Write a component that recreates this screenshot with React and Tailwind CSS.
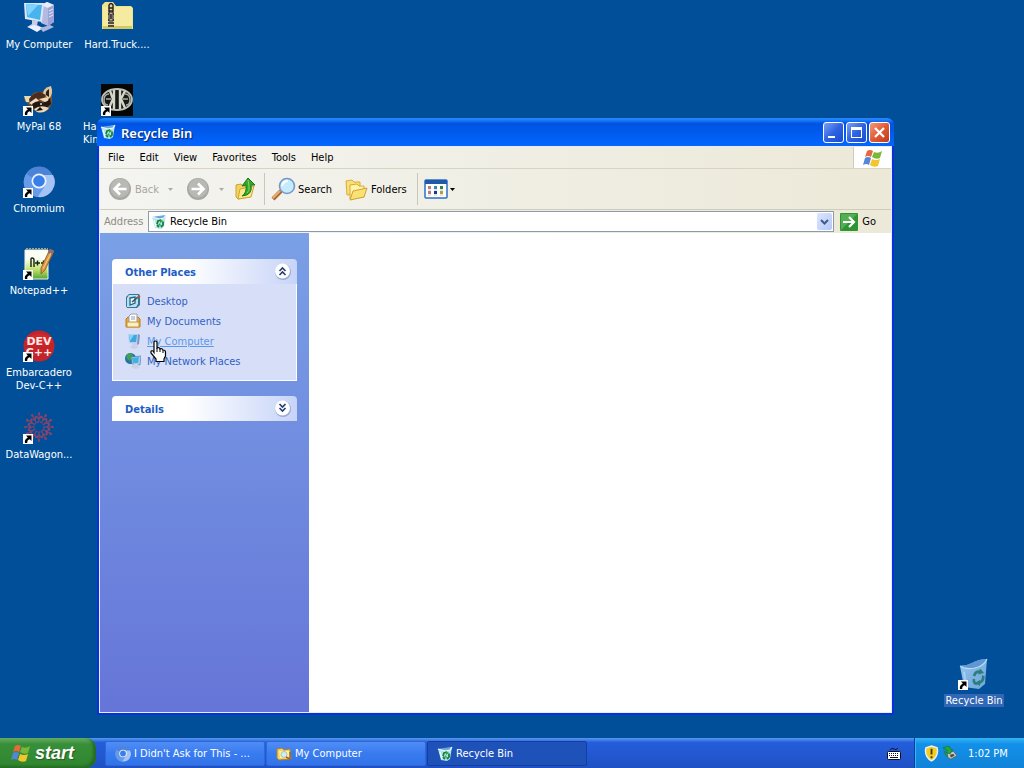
import React, { useState } from "react";

const UI = "font-['DejaVu_Sans_Condensed','DejaVu_Sans',sans-serif]";

function BinIcon({ className }) {
  return (
    <svg viewBox="0 0 32 32" className={className} aria-hidden="true">
      <defs>
        <linearGradient id="bin-body" x1="0" x2="1" y1="0" y2="1">
          <stop offset="0" stopColor="#9fcaf0" />
          <stop offset="0.5" stopColor="#7fb3e4" />
          <stop offset="1" stopColor="#6ea6da" />
        </linearGradient>
      </defs>
      <path d="M2 8 Q8 8 14 5 Q21 1 29 1 L27 26 L21 31 L6 29 Z" fill="url(#bin-body)" />
      <path d="M2 8 Q8 8 14 5 Q21 1 29 1 Q26 8 16 10 Q8 11 2 8 Z" fill="#6097d2" />
      <path d="M2 8 Q9 12 17 10 Q26 8 29 1" fill="none" stroke="#b4dcf6" strokeWidth="1.2" />
      <path d="M6 14 L8 27" stroke="#b9e0f6" strokeWidth="2" opacity="0.6" />
      <g fill="none" stroke="#2b7f78" strokeWidth="2.6">
        <path d="M16 18 Q18 12 23 14 M25 18 Q26 23 21 25 M19 26 Q15 25 16 21" />
      </g>
      <path d="M22 10.5 L26 15 L20 16.500 Z M22 22 L22 28 L17 25 Z M24 17 L27 19 L24 21 Z" fill="#2b7f78" />
    </svg>
  );
}

function SmallBinIcon({ className }) {
  return (
    <svg viewBox="0 0 16 16" className={className} aria-hidden="true">
      <path d="M1 3 L7 3 L15 1 L13 13 L10 15 L4 14 Z" fill="#b4e3f0" />
      <path d="M1 3 L7 2 L15 1 L13 4 L8 5 Z" fill="#6da9d8" />
      <path d="M1 3 L8 5 L13 4 L15 1 M3 6 L5 13" fill="none" stroke="#edfcff" strokeWidth="1.2" />
      <path d="M6 10 L7 7 L10 6 M12 7.500 L12 11 L10 13 M8 13 L6 11" fill="none" stroke="#168034" strokeWidth="1.8" />
      <path d="M9 5 L12 7 L9 9 Z M7 11 L9 9 L10 12 Z" fill="#29a43f" />
    </svg>
  );
}

function FlagIcon({ className }) {
  return (
    <svg viewBox="0 0 20 18" className={className} aria-hidden="true">
      <path d="M4 2 Q7 0 10 2 L8 8 Q5 6 2 8 Z" fill="#e9683b" />
      <path d="M11 3 Q15 5 19 2 L17 9 Q13 11 9 8 Z" fill="#78b83b" />
      <path d="M2 9 Q5 7 8 9 L6 16 Q3 14 0 16 Z" fill="#5286d8" />
      <path d="M9 10 Q13 12 17 10 L15 17 Q11 19 7 16 Z" fill="#f4c52d" />
    </svg>
  );
}

function ComputerIcon({ className }) {
  return (
    <svg viewBox="0 0 32 32" className={className} aria-hidden="true">
      <path d="M18 3 L24 0 L31 3 L31 20 L25 24 L18 21 Z" fill="#b4b9e1" />
      <path d="M18 3 L24 0 L31 3 L25 6 Z" fill="#e9ecfa" />
      <path d="M25 6 L31 3 V20 L25 24 Z" fill="#9aa2d6" />
      <path d="M26 9 L30 7 M26 12 L30 10 M26 15 L30 13" stroke="#e5e9ff" />
      <path d="M1 1 L21 1 L19 20 L2 17 Z" fill="#d9e7f7" />
      <path d="M3 2 L19 3 L17 18 L4 15 Z" fill="#49b3f0" />
      <path d="M3 2 L15 3 L5 14 Z" fill="#7ed4fd" />
      <path d="M9 18 L15 19 L14 23 L20 26 L14 29 L4 25 L9 22 Z" fill="#c7cce9" />
      <path d="M5 25 L11 23 L20 26 L14 30 Z" fill="#edf0fc" />
      <path d="M17 26 L27 23 L31 25 L20 30 Z" fill="#aeb5dc" />
    </svg>
  );
}

function ZipFolderIcon({ className }) {
  return (
    <svg viewBox="0 0 32 32" className={className} aria-hidden="true">
      <path d="M1 3 L4 0 H12 L15 4 H30 L32 6 V27 H1 Z" fill="#eee28a" />
      <path d="M2 5 H31 V26 H2 Z" fill="#f5eba0" />
      <path d="M2 24 H31 V27 H2 Z" fill="#d4c85e" />
      <path d="M7 2 Q10 -1 13 2 V25 H7 Z" fill="#d8d0b0" />
      <path d="M8 3 Q10 0 12 3 V10 M8 3 V10" fill="none" stroke="#272319" strokeWidth="1.4" />
      <path d="M8 6 H12 M8 9 H12 M7 12 H13 M7 18 H13 M7 21 H13 M7 24 H13" stroke="#272319" strokeWidth="1.5" />
      <path d="M8 10 H12 V19 H8 Z" fill="#bab1a7" stroke="#29231c" />
      <path d="M10 12 V17" stroke="#29231c" strokeWidth="1.500" />
    </svg>
  );
}

function RaccoonIcon({ className }) {
  return (
    <svg viewBox="0 0 32 32" className={className} aria-hidden="true">
      <path d="M3 13 Q0 12 2 17 L9 25 Q17 31 25 26 Q30 21 29 13 L28 3 Q23 3 19 8 Q11 7 8 12 Z" fill="#745339" />
      <path d="M28 2 Q20 4 20 10 L26 15 Q31 10 28 2 Z" fill="#dec8a2" />
      <path d="M26 5 Q22 7 23 11 L26 13 Z" fill="#2b2019" />
      <path d="M1 12 L8 12 L7 18 L3 18 Z" fill="#e7d9b8" />
      <path d="M6 15 Q10 9 17 8 L23 11 L20 15 L13 15 L7 21 Z" fill="#4b2c1d" />
      <path d="M6 19 L13 14 L16 17 L11 22 Z" fill="#f1ddbc" />
      <path d="M9 20 Q15 15 20 19 L27 14 L28 20 L22 25 L11 25 Z" fill="#251812" />
      <path d="M16 15 L25 13 Q27 17 22 18 Z M11 25 Q18 20 26 24 Q21 30 14 28 Z" fill="#f0d8b4" />
      <circle cx="18" cy="20" r="1" fill="#c5e0e8" />
      <path d="M13 27 L17 23 L20 26 Z" fill="#110d0c" />
    </svg>
  );
}

function EmblemIcon({ className }) {
  return (
    <svg viewBox="0 0 32 32" className={className} aria-hidden="true">
      <rect width="32" height="32" fill="#050605" />
      <ellipse cx="16" cy="15.500" rx="15" ry="10.500" fill="#171817" stroke="#bcc2b5" strokeWidth="1.8" />
      <path d="M13 6 V25 M12 15 L9 7 M12 15 L8 24 M19 6 V25 M20 15 L24 7 M20 15 L24 24" fill="none" stroke="#d4d6c8" strokeWidth="2.4" />
      <path d="M8 10 Q3 10 3 16 Q3 21 7 21 M24 10 Q29 10 29 16 Q29 21 25 21 M5 15 H10 M22 15 H27" fill="none" stroke="#a8ad9e" strokeWidth="1.6" />
    </svg>
  );
}

function ChromiumIcon({ className }) {
  return (
    <svg viewBox="0 0 32 32" className={className} aria-hidden="true">
      <circle cx="16" cy="16" r="15" fill="#79a9ed" />
      <path d="M16 16 L3 8 A15 15 0 0 1 30 10 H16 Z" fill="#4d83d7" />
      <path d="M16 16 L3 8 A15 15 0 0 0 14 31 L22 20 Z" fill="#669be8" />
      <path d="M18 9 H30 A15 15 0 0 1 15 31 L22 20 Z" fill="#a6c4f3" />
      <circle cx="16" cy="15" r="7.500" fill="#edf4ff" />
      <circle cx="16" cy="15" r="5.800" fill="#397fea" />
    </svg>
  );
}

function NotepadIcon({ className }) {
  return (
    <svg viewBox="0 0 32 32" className={className} aria-hidden="true">
      <defs>
        <linearGradient id="note-page" x1="0" x2="0" y1="0" y2="1">
          <stop offset="0.3" stopColor="#fbfff4" />
          <stop offset="0.65" stopColor="#c5e675" />
          <stop offset="1" stopColor="#54a62c" />
        </linearGradient>
      </defs>
      <path d="M2 2 H25 V31 H2 Z" fill="url(#note-page)" stroke="#f1f6e8" />
      <path d="M3 1 H25" stroke="#9aa597" strokeWidth="2" strokeDasharray="2 1" />
      <path d="M8 19 V11 Q8 10 9 10 Q11 10 11 12 V19 M12 15 H17 M14.500 12.500 V17.500 M18 15 H23 M20.500 12.500 V17.500" fill="none" stroke="#17230f" strokeWidth="1.4" />
      <path d="M27 1 L31 3 L22 22 L18 26 L18 20 Z" fill="#df943f" stroke="#8a572c" strokeWidth="0.8" />
      <path d="M27 1 L31 3 L29 7 L25 5 Z" fill="#8c6f74" />
      <path d="M28 5 L20 21" stroke="#f7d386" />
    </svg>
  );
}

function DevIcon({ className }) {
  return (
    <svg viewBox="0 0 32 32" className={className} aria-hidden="true">
      <circle cx="16" cy="16" r="15.500" fill="#c4232a" />
      <path d="M2 13 A15 15 0 0 1 30 13 Z" fill="#d1292f" />
      <text x="16" y="15" textAnchor="middle" fill="#ffe9e4" fontSize="11" fontWeight="700" fontFamily="DejaVu Sans">DEV</text>
      <text x="16" y="26" textAnchor="middle" fill="#ffe9e4" fontSize="11" fontWeight="700" fontFamily="DejaVu Sans">C++</text>
    </svg>
  );
}

function WagonIcon({ className }) {
  const spokes = [0, 30, 60, 90, 120, 150, 180, 210, 240, 270, 300, 330];
  return (
    <svg viewBox="0 0 32 32" className={className} aria-hidden="true">
      <g fill="none" stroke="#8b4468" strokeWidth="1.1">
        <circle cx="16" cy="15" r="5" strokeDasharray="2 1" />
        {spokes.map((a) => (
          <g key={a} transform={`rotate(${a} 16 15)`}>
            <path d="M16 10 V2 M16 7 L13 4 M16 7 L19 4" />
            <circle cx="16" cy="1.500" r="0.800" />
            <circle cx="18" cy="5" r="0.600" />
          </g>
        ))}
      </g>
    </svg>
  );
}

function ShortcutArrow() {
  return (
    <svg viewBox="0 0 10 10" className="absolute bottom-0 left-0 size-[10px]" aria-hidden="true">
      <rect width="10" height="10" fill="#fff" />
      <path d="M3 1.500 H8.500 V7 L6.800 5.300 Q4 6 4.200 9 L2 9 Q1 5.500 4.800 3.400 Z" fill="#000" />
    </svg>
  );
}

function DesktopIcon({ icon: Icon, label, shortcut, selected, left }) {
  return (
    <button type="button" className={`flex h-[82px] w-[76px] flex-col gap-1 ${left ? "items-start pl-[3px]" : "items-center"}`}>
      <span className={`relative size-8 shrink-0 ${left ? "ml-[19px]" : ""}`}>
        <Icon className="size-8" />
        {shortcut && <ShortcutArrow />}
      </span>
      <span className={`whitespace-pre px-px text-[11px] leading-[13px] text-white ${selected ? "bg-[#3167b4]" : ""} ${left ? "text-left" : "text-center"}`}>{label}</span>
    </button>
  );
}

function RoundArrow({ flip }) {
  return (
    <svg viewBox="0 0 24 24" className="size-6" aria-hidden="true">
      <circle cx="12" cy="12" r="11" fill="#a7a7a3" />
      <circle cx="12" cy="11" r="9.500" fill="#b8b8b5" />
      <path d={flip ? "M5.500 12 H17 M12 6.500 L17.500 12 L12 17.500" : "M18.500 12 H7 M12 6.500 L6.500 12 L12 17.500"} fill="none" stroke="#fff" strokeWidth="2.600" />
    </svg>
  );
}

function Caret({ className }) {
  return (
    <svg viewBox="0 0 5 3" className={`h-[3px] w-[5px] ${className}`} aria-hidden="true">
      <path d="M0 0 H5 L2.500 3 Z" fill="currentColor" />
    </svg>
  );
}

function Toolbar() {
  return (
    <div className="flex h-[41px] shrink-0 items-center border-t border-[#d8d3c3] pl-2 text-black">
      <button type="button" disabled className="flex items-center gap-[3px] text-[#a7a69c]">
        <RoundArrow />
        <span>Back</span>
      </button>
      <Caret className="ml-[9px] text-[#aeada5]" />
      <button type="button" disabled aria-label="Forward" className="ml-[13px]"><RoundArrow flip /></button>
      <Caret className="ml-[9px] text-[#aeada5]" />
      <button type="button" aria-label="Up" className="ml-[10px]">
        <svg viewBox="0 0 24 24" className="size-6" aria-hidden="true">
          <path d="M2 8 L7 7 L9 9 L16 8 V20 L4 22 L2 20 Z" fill="#f2d260" stroke="#d0a42c" />
          <path d="M6 12 L20 9 L17 20 L4 22 Z" fill="#fbe88c" stroke="#d0a42c" />
          <path d="M8 19 Q13 16 12 8 L8 9 L14 1 L21 8 L17 8 Q19 18 8 19 Z" fill="#35a62e" stroke="#167a1a" />
          <path d="M14 3 L15 9 Q16 14 13 16" fill="none" stroke="#89da59" />
        </svg>
      </button>
      <span className="ml-[6px] h-8 border-r border-[#cbc7b8]" />
      <button type="button" className="ml-[6px] flex items-center gap-[2px]">
        <svg viewBox="0 0 25 24" className="h-6 w-[25px]" aria-hidden="true">
          <path d="M2 22 L10 14" stroke="#a96733" strokeWidth="4" />
          <path d="M2 21 L9 14" stroke="#ecae6d" strokeWidth="2" />
          <circle cx="16" cy="9" r="7.500" fill="#c6ebfc" stroke="#7598c7" strokeWidth="1.600" />
          <path d="M11 9 Q12 4 17 4" fill="none" stroke="#fff" strokeWidth="2" />
        </svg>
        <span>Search</span>
      </button>
      <button type="button" className="ml-3 flex items-center gap-[2px]">
        <svg viewBox="0 0 25 24" className="h-6 w-[25px]" aria-hidden="true">
          <path d="M2 4 L8 3 L10 5 L16 5 L16 16 L3 18 Z" fill="#f9df79" stroke="#d6af36" />
          <path d="M6 8 L13 7 L15 9 L20 9 L20 20 L6 22 Z" fill="#fff3aa" stroke="#d6aa30" />
          <path d="M9 14 L23 11 L20 20 L6 23 Z" fill="#fae176" stroke="#cea330" />
        </svg>
        <span>Folders</span>
      </button>
      <span className="ml-[10px] h-8 border-r border-[#cbc7b8]" />
      <button type="button" aria-label="Views" className="ml-[6px] flex items-center gap-[2px]">
        <svg viewBox="0 0 24 20" className="h-5 w-6" aria-hidden="true">
          <rect x="1" y="1" width="22" height="18" rx="1" fill="#fff" stroke="#2d70c6" strokeWidth="1.500" />
          <path d="M1 1 H23 V5 H1 Z" fill="#2158a7" />
          <path d="M4 7h3v3H4z M4 12h3v3H4z" fill="#b97c80" />
          <path d="M10 7h3v3h-3z" fill="#4183b2" />
          <path d="M16 7h3v3h-3z" fill="#278b35" />
          <path d="M10 12h3v3h-3z" fill="#173a8c" />
          <path d="M16 12h3v3h-3z" fill="#b79c3a" />
          <path d="M4 11h3 M10 11h3 M16 11h3 M4 16h3 M10 16h3 M16 16h3" stroke="#c5c9d5" />
        </svg>
        <Caret className="text-black" />
      </button>
    </div>
  );
}

function PlaceIcon({ kind }) {
  return (
    <svg viewBox="0 0 16 16" className="size-4 shrink-0" aria-hidden="true">
      {kind === "desktop" && (
        <>
          <path d="M1 4 L4 1 H14 L15 3 V12 L12 15 H2 L1 13 Z" fill="#3a7391" />
          <path d="M2 5 L4 2 H13 V11 L11 14 H2 Z" fill="#b5e2f2" />
          <path d="M5 5 L10 4 V10 L5 12 Z" fill="#eefaff" stroke="#27627f" strokeWidth="1.300" />
          <path d="M7 9 L13 4" stroke="#27506b" strokeWidth="1.600" />
          <path d="M12 5 L15 3" stroke="#b8552f" strokeWidth="1.600" />
        </>
      )}
      {kind === "documents" && (
        <>
          <path d="M1 6 L3 4 H13 L15 6 V14 H1 Z" fill="#e6a73c" stroke="#bd7a22" />
          <path d="M4 3 L6 1 H12 V11 H4 Z" fill="#fff" stroke="#93a2b5" />
          <path d="M6 4 H10 M6 6 H10" stroke="#8f9bb7" />
          <path d="M2 9 H14 V14 H2 Z" fill="#f9efc0" stroke="#cc9534" />
        </>
      )}
      {kind === "computer" && (
        <>
          <path d="M3 1 L14 1 L13 11 L4 10 Z" fill="#b8cfea" />
          <path d="M4 2 L12 2 L11 9 L5 9 Z" fill="#3fa6e2" />
          <path d="M4 2 L9 2 L5 8 Z" fill="#7bd5f7" />
          <path d="M13 1 L15 2 L14 11 L12 12 Z" fill="#7f96c4" />
          <path d="M7 10 H12 V13 L14 14 L9 16 L4 14 L7 13 Z" fill="#c9cfe6" />
        </>
      )}
      {kind === "network" && (
        <>
          <circle cx="5.500" cy="5.500" r="5.500" fill="#2474a8" />
          <path d="M2 1 Q7 -1 8 3 L5 8 Q0 6 2 1 Z" fill="#3fa34d" />
          <path d="M6 4 L16 3 L15 12 L7 11 Z" fill="#a9cdeb" stroke="#4575a3" strokeWidth="0.600" />
          <path d="M7 5 L14 4 L13 10 L8 10 Z" fill="#3fb1e4" />
          <path d="M9 11 H13 V13 L15 15 L10 16 L6 14 Z" fill="#ccd2e6" />
        </>
      )}
    </svg>
  );
}

function PanelHeader({ title, up }) {
  return (
    <div className="flex h-[25px] items-center justify-between rounded-t-[4px] bg-linear-to-r from-white from-40% to-[#c7d4f7] pl-[13px] pr-[6px]">
      <h2 className="pt-[2px] text-[11px] font-bold text-[#215dc6]">{title}</h2>
      <button type="button" aria-label={up ? "Collapse" : "Expand"} className="mb-px size-[17px]">
        <svg viewBox="0 0 17 17" className="size-[17px]" aria-hidden="true">
          <circle cx="9" cy="9" r="8" fill="#9aaad6" />
          <circle cx="8.500" cy="8" r="7.500" fill="#fff" />
          <path d={up ? "M5.500 8 L8.500 5 L11.500 8 M5.500 12 L8.500 9 L11.500 12" : "M5.500 4 L8.500 7 L11.500 4 M5.500 8 L8.500 11 L11.500 8"} fill="none" stroke="#253c70" strokeWidth="1.600" />
        </svg>
      </button>
    </div>
  );
}

function SidePane() {
  const places = [
    ["desktop", "Desktop"],
    ["documents", "My Documents"],
    ["computer", "My Computer"],
    ["network", "My Network Places"],
  ];
  return (
    <aside className="flex w-[209px] shrink-0 flex-col gap-[15px] bg-linear-to-b from-[#7aa0e6] to-[#6675d8] px-3 pt-[26px]">
      <section>
        <PanelHeader title="Other Places" up />
        <ul className="relative flex flex-col border border-t-0 border-white bg-[#d6dff7] pt-[7px] pr-2 pb-[9px] pl-3">
          {places.map(([kind, name]) => (
            <li key={kind}>
              <a href="#" className={`flex h-5 items-center gap-[6px] whitespace-nowrap ${kind === "computer" ? "text-[#5a98ea] underline" : "text-[#315fc4]"}`}>
                <PlaceIcon kind={kind} />
                <span>{name}</span>
              </a>
            </li>
          ))}
          <svg viewBox="0 0 18 23" className="absolute left-9 top-[56px] h-[23px] w-[18px]" aria-hidden="true">
            <path d="M5 2 Q5 1 6.500 1 Q8 1 8 2.500 V8 Q10.500 7 11 9 Q13 8 14 10 Q16.500 10 16.500 12 V16 L15 19 V21.500 H7 V19 L2 13 Q1.500 10 4 11 L5 12.500 Z" fill="#fff" stroke="#000" strokeWidth="1.200" />
            <path d="M8 8 V12 M11 9 V12 M14 10 V13" stroke="#000" />
          </svg>
        </ul>
      </section>
      <section>
        <PanelHeader title="Details" />
      </section>
    </aside>
  );
}

function TitleButton({ label, red, children }) {
  return (
    <button type="button" aria-label={label} className={`size-[21px] rounded-[3px] border border-white ${red ? "bg-linear-to-br from-[#f09a7c] via-[#e05a35] to-[#c03a1a]" : "bg-linear-to-br from-[#7a9ff5] via-[#2f62e2] to-[#174bd0]"}`}>
      <svg viewBox="0 0 19 19" className="size-[19px]" aria-hidden="true">{children}</svg>
    </button>
  );
}

function ExplorerWindow() {
  const [address, setAddress] = useState("Recycle Bin");
  return (
    <main className="absolute top-[118px] right-[130px] bottom-[23px] left-[97px] flex flex-col rounded-t-[7px] bg-[#0831d9] px-[2px] pb-[2px]">
      <header className="-mx-[2px] flex h-7 shrink-0 items-center gap-[5px] rounded-t-[7px] bg-linear-to-b from-[#2385ff] from-4% via-[#0053e1] via-20% to-[#0366ff] pr-1 pl-[3px]">
        <SmallBinIcon className="size-4" />
        <h1 className="flex-1 pt-[2px] font-['Noto_Sans','Open_Sans',sans-serif] text-[13px] font-semibold text-white [text-shadow:1px_1px_1px_#0a246a]">Recycle Bin</h1>
        <div className="flex gap-[2px] pt-px">
          <TitleButton label="Minimize"><path d="M4 13 H11 V15 H4 Z" fill="#fff" /></TitleButton>
          <TitleButton label="Maximize"><path d="M4 4 H15 V15 H4 Z M5 7 H14 V14 H5 Z" fillRule="evenodd" fill="#fff" /></TitleButton>
          <TitleButton label="Close" red><path d="M5 5 L14 14 M14 5 L5 14" stroke="#fff" strokeWidth="2.300" /></TitleButton>
        </div>
      </header>
      <div className="flex min-h-0 flex-1 flex-col border border-[#e6ecfb] bg-linear-to-r from-[#f4f4f1] to-[#ece9d8]">
        <div className="flex h-[21px] shrink-0 items-stretch">
          <nav className="flex flex-1 items-center gap-[15px] pl-2">
            {["File", "Edit", "View", "Favorites", "Tools", "Help"].map((item) => (
              <button type="button" key={item}>{item}</button>
            ))}
          </nav>
          <span className="flex w-[38px] items-center justify-center border-l border-[#d0ccbd] bg-white">
            <FlagIcon className="h-[18px] w-5" />
          </span>
        </div>
        <Toolbar />
        <div className="flex h-6 shrink-0 items-center border-t border-[#d0ccbc] pr-[15px] pl-1">
          <label htmlFor="address" className="w-11 text-[#8e8c82]">Address</label>
          <div className="flex h-[21px] flex-1 items-center border border-[#8b9bae] bg-white pl-[2px]">
            <SmallBinIcon className="size-4" />
            <input id="address" value={address} onChange={(e) => setAddress(e.target.value)} className="ml-[3px] h-4 min-w-0 flex-1 bg-transparent outline-none" />
            <button type="button" aria-label="Show addresses" className="mr-px flex h-[17px] w-[15px] items-center justify-center rounded-[2px] bg-linear-to-br from-[#dce6ff] to-[#b4c8f5]">
              <svg viewBox="0 0 9 6" className="h-[6px] w-[9px]" aria-hidden="true"><path d="M1 1 L4.500 4.500 L8 1" fill="none" stroke="#405a8c" strokeWidth="2" /></svg>
            </button>
          </div>
          <button type="button" className="ml-[6px] flex items-center gap-1">
            <svg viewBox="0 0 18 18" className="size-[18px]" aria-hidden="true">
              <rect width="18" height="18" rx="1" fill="#2f9434" />
              <path d="M1 1 H17 L1 17 Z" fill="#54ae53" />
              <path d="M3 9 H14 M9 4 L14 9 L9 14" fill="none" stroke="#fff" strokeWidth="2.200" />
            </svg>
            <span>Go</span>
          </button>
        </div>
        <div className="flex min-h-0 flex-1">
          <SidePane />
          <div className="flex-1 bg-white" />
        </div>
      </div>
    </main>
  );
}

function FolderSearchIcon({ className }) {
  return (
    <svg viewBox="0 0 16 16" className={className} aria-hidden="true">
      <path d="M1 3 L6 2 L8 4 L14 3 L15 13 L3 14 L1 12 Z" fill="#f5d160" stroke="#af812b" />
      <path d="M3 5 H13 V12 H4 Z" fill="#fff1a8" />
      <circle cx="8" cy="8.500" r="3" fill="#d2edf3" stroke="#9fb8a5" strokeWidth="0.800" />
      <path d="M10 11 L14 13 L14 6" fill="none" stroke="#9e6424" strokeWidth="1.400" />
    </svg>
  );
}

function TaskButton({ icon: Icon, children, active }) {
  return (
    <button type="button" className={`flex h-[25px] max-w-[160px] flex-1 items-center gap-[3px] rounded-[2px] border pl-[9px] text-left whitespace-nowrap text-white ${active ? "border-[#153f9f] bg-[#1f52b9]" : "border-[#2c67dc] bg-linear-to-b from-[#508df5] via-[#387bf0] to-[#3373e8]"}`}>
      <Icon className="size-4 shrink-0" />
      <span>{children}</span>
    </button>
  );
}

function Taskbar() {
  return (
    <footer className="flex h-[30px] shrink-0 items-stretch bg-linear-to-b from-[#5a98f2] via-[#245edb] via-15% to-[#1f50c4]">
      <button type="button" className="flex w-24 items-center gap-1 rounded-r-[10px] bg-linear-to-b from-[#65ad63] via-[#388f39] via-20% to-[#2f862e] pl-[11px] shadow-[inset_-3px_-2px_3px_#246b25]">
        <FlagIcon className="h-[18px] w-5" />
        <span className="font-['Liberation_Sans',sans-serif] text-[18px] leading-5 font-bold text-white italic [text-shadow:1px_1px_1px_#255c24]">start</span>
      </button>
      <nav className="flex flex-1 items-center gap-px pt-px pl-[9px]">
        <TaskButton icon={ChromiumIcon}>I Didn't Ask for This - ...</TaskButton>
        <TaskButton icon={FolderSearchIcon}>My Computer</TaskButton>
        <TaskButton icon={SmallBinIcon} active>Recycle Bin</TaskButton>
      </nav>
      <button type="button" aria-label="Keyboard" className="mr-[13px]">
        <svg viewBox="0 0 14 13" className="h-[13px] w-[14px]" aria-hidden="true">
          <path d="M3 3 Q5 0 7 2 Q9 4 11 1" fill="none" stroke="#0b1646" />
          <rect x="0.500" y="4.500" width="13" height="8" rx="1" fill="#fff" stroke="#090e27" />
          <path d="M2 6.500 H12 M2 8.500 H12" stroke="#090e27" strokeDasharray="1 1" strokeWidth="1.200" />
          <path d="M3 10.500 H11" stroke="#090e27" />
        </svg>
      </button>
      <div className="flex w-[110px] items-center gap-1 border-l border-[#0d3a9a] bg-linear-to-b from-[#35b6f5] via-[#1290e9] via-20% to-[#1183d8] pl-[9px] text-white shadow-[inset_1px_0_0_#27bdf8]">
        <svg viewBox="0 0 16 18" className="h-[17px] w-[15px]" aria-hidden="true">
          <path d="M8 1 L14 3 Q16 12 8 17 Q0 12 2 3 Z" fill="#f3cd24" stroke="#e9eff2" strokeWidth="1.500" />
          <path d="M8 4 V10 M8 12 V14" stroke="#4c3b11" strokeWidth="2" />
        </svg>
        <svg viewBox="0 0 16 16" className="size-[14px]" aria-hidden="true">
          <path d="M5 8 L12 6 L16 11 L9 15 L5 13 Z" fill="#c3c7c1" stroke="#4d5351" strokeWidth="0.800" />
          <path d="M8 10 L12 9 L13 11 L9 13 Z" fill="#454a48" />
          <path d="M0 2 L7 0 L9 4 L11 4 L8 9 L3 7 L5 5 Z" fill="#29a73f" stroke="#147329" strokeWidth="0.800" />
          <path d="M1 5 L3 10 L6 13" fill="none" stroke="#1f8a35" strokeWidth="1.500" />
        </svg>
        <time className="ml-[7px]">1:02 PM</time>
      </div>
    </footer>
  );
}

export default function App() {
  return (
    <div className={`flex h-screen flex-col overflow-hidden bg-[#004f98] text-[11px] leading-[13px] ${UI}`}>
      <div className="relative flex min-h-0 flex-1 justify-between">
        <div className="flex gap-[2px] pt-[2px] pl-px">
          <div className="flex flex-col">
            <DesktopIcon icon={ComputerIcon} label="My Computer" />
            <DesktopIcon icon={RaccoonIcon} label="MyPal 68" shortcut />
            <DesktopIcon icon={ChromiumIcon} label="Chromium" shortcut />
            <DesktopIcon icon={NotepadIcon} label="Notepad++" shortcut />
            <DesktopIcon icon={DevIcon} label={"Embarcadero\nDev-C++"} shortcut />
            <DesktopIcon icon={WagonIcon} label="DataWagon..." shortcut />
          </div>
          <div className="flex flex-col">
            <DesktopIcon icon={ZipFolderIcon} label="Hard.Truck...." />
            <DesktopIcon icon={EmblemIcon} label={"Ha...\nKin..."} shortcut left />
          </div>
        </div>
        <div className="-mb-[2px] flex items-end pr-3">
          <DesktopIcon icon={BinIcon} label="Recycle Bin" shortcut selected />
        </div>
        <ExplorerWindow />
      </div>
      <Taskbar />
    </div>
  );
}
